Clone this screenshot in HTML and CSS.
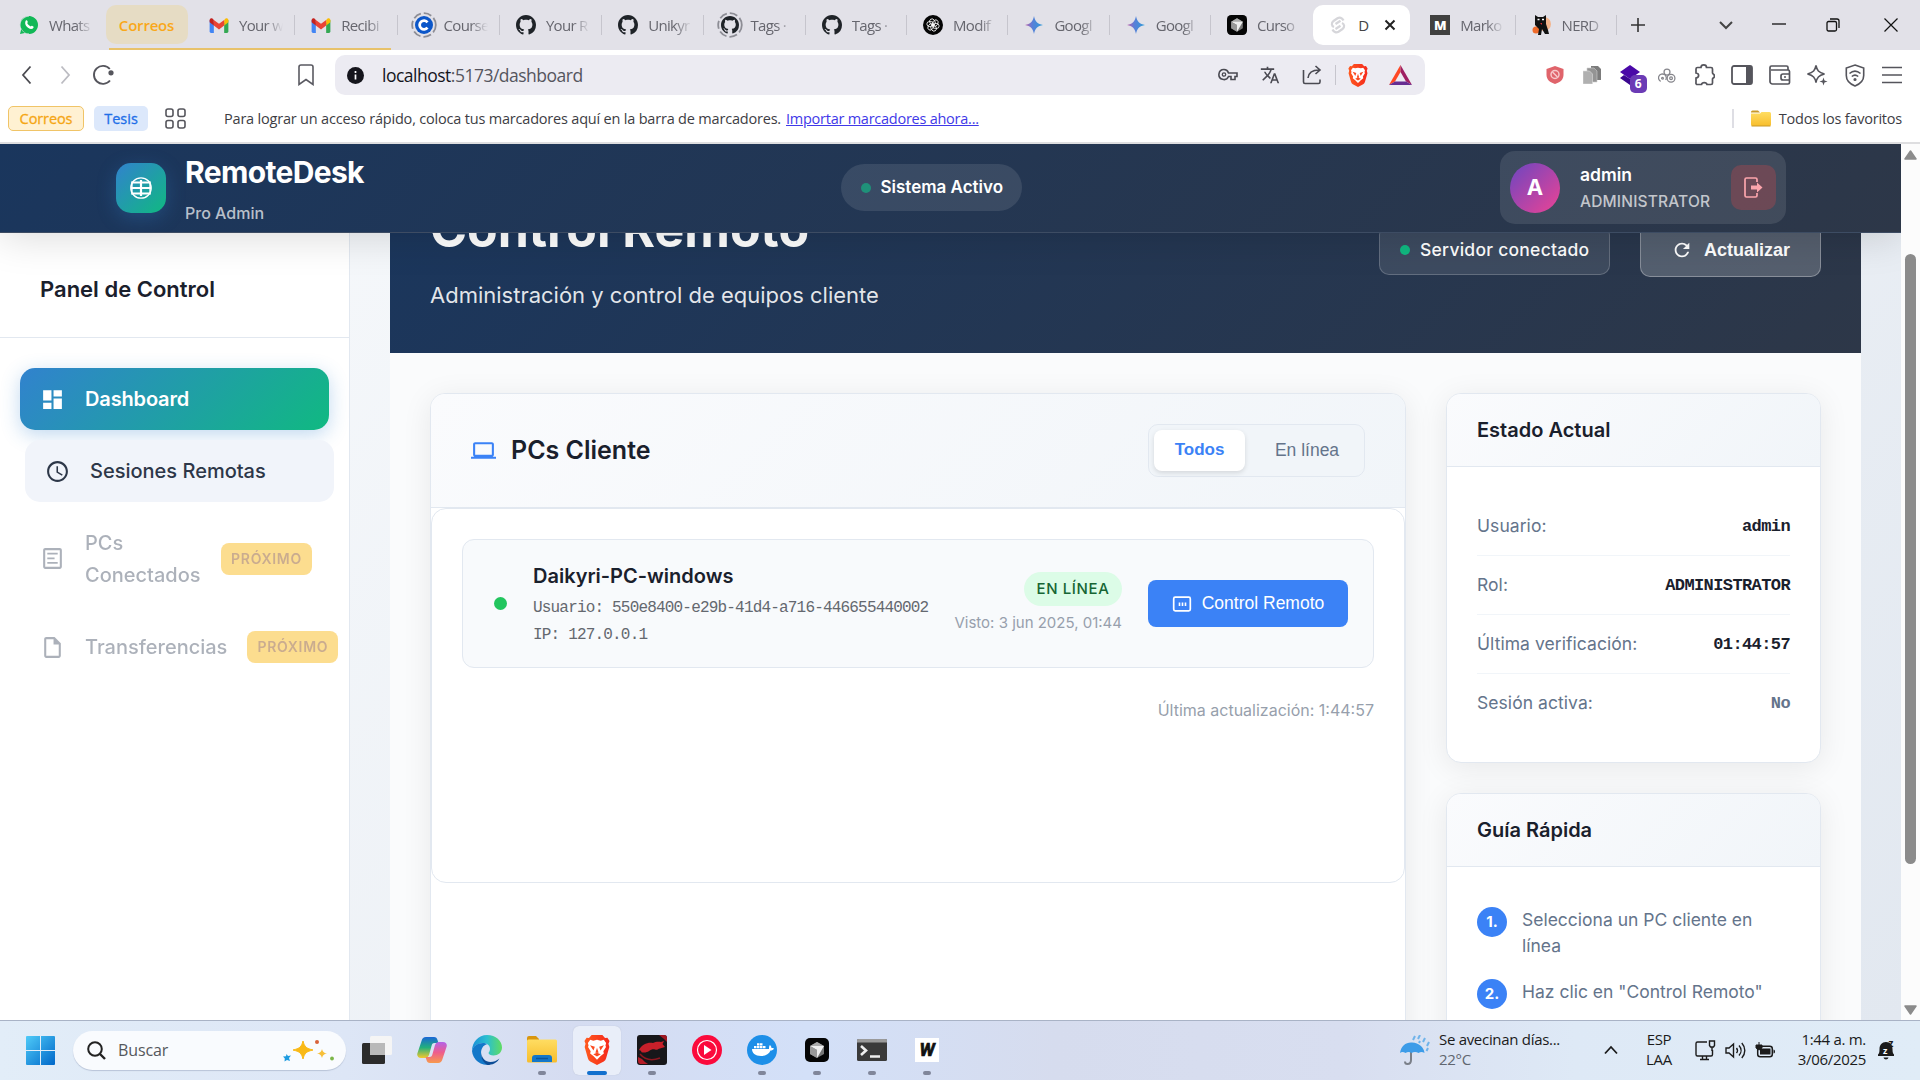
FILE: index.html
```html
<!DOCTYPE html>
<html lang="es">
<head>
<meta charset="utf-8">
<title>Dashboard - RemoteDesk</title>
<link rel="stylesheet" href="styles.css">
</head>
<body>
<svg class="defs" width="0" height="0">
  <defs>
    <linearGradient id="g-gem" x1="0" y1="0" x2="1" y2="0"><stop offset="0" stop-color="#c25fa8"/><stop offset=".4" stop-color="#5a7fd8"/><stop offset="1" stop-color="#2b9bd8"/></linearGradient>
    <linearGradient id="g-win" x1="0" y1="0" x2="1" y2="1"><stop offset="0" stop-color="#4fcbf8"/><stop offset="1" stop-color="#0067c9"/></linearGradient>
    <linearGradient id="g-edge" x1="0" y1="0" x2="1" y2="0"><stop offset="0" stop-color="#1b8fd8"/><stop offset=".5" stop-color="#2bbfd0"/><stop offset="1" stop-color="#5fdc62"/></linearGradient>
    <linearGradient id="g-cop1" x1="0" y1="0" x2="0" y2="1"><stop offset="0" stop-color="#1a66d6"/><stop offset=".5" stop-color="#22b07c"/><stop offset="1" stop-color="#f5c92c"/></linearGradient>
    <linearGradient id="g-cop2" x1="0" y1="0" x2="0" y2="1"><stop offset="0" stop-color="#b364e8"/><stop offset=".5" stop-color="#ee5d8d"/><stop offset="1" stop-color="#f79a4d"/></linearGradient>
    <linearGradient id="g-fold" x1="0" y1="0" x2="0" y2="1"><stop offset="0" stop-color="#ffdd62"/><stop offset="1" stop-color="#f7bd2c"/></linearGradient>
    <linearGradient id="g-brave" x1="0" y1="0" x2="1" y2="0"><stop offset="0" stop-color="#ff5a1f"/><stop offset="1" stop-color="#f5291c"/></linearGradient>
  </defs>
  <symbol id="gmail" viewBox="0 0 20 16"><path fill="#4285f4" d="M0 2v12.5A1.5 1.5 0 001.5 16H4.5V5z"/><path fill="#34a853" d="M20 2v12.5a1.500 1.500 0 01-1.500 1.500H15.500V5z"/><path fill="#c5221f" d="M0 2.500v2L4.500 8V2L3 .600C1.500-.500 0 .700 0 2.500z"/><path fill="#fbbc04" d="M20 2.500v2L15.500 8V2L17 .600c1.500-1.100 3 .100 3 1.900z"/><path fill="#ea4335" d="M4.500 2L10 6.200 15.500 2v6L10 12.200 4.500 8z"/></symbol>
  <symbol id="github" viewBox="0 0 16 16"><path d="M8 0C3.58 0 0 3.58 0 8c0 3.54 2.29 6.53 5.47 7.59.4.07.55-.17.55-.38 0-.19-.01-.82-.01-1.49-2.01.37-2.53-.49-2.69-.94-.09-.23-.48-.94-.82-1.13-.28-.15-.68-.52-.01-.53.63-.01 1.08.58 1.23.82.72 1.21 1.87.87 2.33.66.07-.52.28-.87.51-1.07-1.78-.2-3.64-.89-3.64-3.95 0-.87.31-1.59.82-2.15-.08-.2-.36-1.02.08-2.12 0 0 .67-.21 2.2.82.64-.18 1.32-.27 2-.27.68 0 1.36.09 2 .27 1.53-1.04 2.2-.82 2.2-.82.44 1.1.16 1.92.08 2.12.51.56.82 1.27.82 2.15 0 3.07-1.87 3.75-3.65 3.95.29.25.54.73.54 1.48 0 1.07-.01 1.93-.01 2.2 0 .21.15.46.55.38A8.013 8.013 0 0016 8c0-4.42-3.58-8-8-8z" fill="#1f2328"/></symbol>
  <symbol id="gem" viewBox="0 0 20 20"><path d="M10 1c.9 5.300 3.700 8.100 9 9-5.300.900-8.100 3.700-9 9-.900-5.300-3.700-8.100-9-9 5.300-.900 8.100-3.700 9-9z" fill="url(#g-gem)"/></symbol>
  <symbol id="cursor" viewBox="0 0 24 24"><rect width="24" height="24" rx="5" fill="#050505"/><path d="M12 4l7 4v8l-7 4-7-4V8z" fill="#777"/><path d="M5 8l7-4 7 4-7 1z" fill="#aaa"/><path d="M5 8h14l-7 12v-8z" fill="#eee"/><path d="M5 8l7 4v8l-7-4z" fill="#999"/></symbol>
  <symbol id="brave" viewBox="0 0 24 28"><path d="M7 0h10l2.500 2.800 2.200-.3 2 3-1 2.700.8 3-3 10.500c-.5 1.500-1 2.200-2.200 3L12 28l-6.300-3.300c-1.200-.8-1.700-1.500-2.200-3L.5 11.200l.8-3-1-2.700 2-3 2.200.3z" fill="url(#g-brave)"/><path d="M12 4.500l3.500.8 2.800-.8 2.200 3-.6 2.200.5 1.500-2.500 4 .5 2-3 2.500L12 23l-3.400-3.300-3-2.500.5-2-2.500-4 .5-1.500-.6-2.200 2.200-3 2.800.8z" fill="#fff"/><path d="M5.500 9.500l4.500 1.500-1.300 3.500zM18.500 9.500L14 11l1.300 3.500zM12 12l1.500 4.500h-3zM8.500 18l3.500-1.500 3.500 1.500L12 20z" fill="#fb4a20"/></symbol>
</svg>

<header class="tabstrip">
  <div class="tab tab-first"><svg width="18" height="18" viewBox="0 0 20 20"><path d="M10 0a10 10 0 100 20 10 10 0 01-4.700-1.200L0 20l1.300-5A10 10 0 1110 20z" fill="#15b858"/><circle cx="10" cy="10" r="9.500" fill="#12b857"/><path d="M6.500 5c.8-.8 1.500-.3 1.900.8.400 1 .2 1.300-.4 2 .9 1.900 2.100 3 4 3.800.7-.8 1-.9 1.800-.5 1.500.7 1.600 1 1.100 2-1.100 1.900-3.600 1.600-6-.1C6.300 11 4.800 8.300 6.500 5z" fill="#fff"/></svg><span>Whats</span></div>
  <div class="tab-group">Correos</div>
  <nav class="tabs">
    <div class="tab wide"><svg width="19" height="15"><use href="#gmail"/></svg><span>Your w</span></div>
    <div class="tab wide"><svg width="19" height="15"><use href="#gmail"/></svg><span>Recibi</span></div>
    <div class="tab wide"><svg class="ringed" width="26" height="26" viewBox="0 0 26 26"><circle cx="13" cy="13" r="11.800" fill="none" stroke="#8d8d95" stroke-width="1.800" stroke-dasharray="8 3"/><circle cx="13" cy="13" r="9" fill="#0b56c9"/><path d="M16.500 10.300a4.400 4.400 0 100 5.400" fill="none" stroke="#fff" stroke-width="2.800"/></svg><span>Course</span></div>
    <div class="tab wide"><svg width="20" height="20"><use href="#github"/></svg><span>Your R</span></div>
    <div class="tab wide"><svg width="20" height="20"><use href="#github"/></svg><span>Unikyr</span></div>
    <div class="tab"><svg class="ringed" width="26" height="26" viewBox="0 0 26 26"><circle cx="13" cy="13" r="11.800" fill="none" stroke="#8d8d95" stroke-width="1.800" stroke-dasharray="8 3"/><use href="#github" x="4" y="4" width="18" height="18"/></svg><span>Tags ·</span></div>
    <div class="tab"><svg width="20" height="20"><use href="#github"/></svg><span>Tags ·</span></div>
    <div class="tab"><svg width="20" height="20" viewBox="0 0 20 20"><circle cx="10" cy="10" r="10" fill="#050505"/><g fill="none" stroke="#fff" stroke-width=".8"><ellipse cx="11" cy="7.200" rx="2.600" ry="3.400" transform="rotate(30 10 10)"/><ellipse cx="11" cy="7.200" rx="2.600" ry="3.400" transform="rotate(90 10 10)"/><ellipse cx="11" cy="7.200" rx="2.600" ry="3.400" transform="rotate(150 10 10)"/><ellipse cx="11" cy="7.200" rx="2.600" ry="3.400" transform="rotate(210 10 10)"/><ellipse cx="11" cy="7.200" rx="2.600" ry="3.400" transform="rotate(270 10 10)"/><ellipse cx="11" cy="7.200" rx="2.600" ry="3.400" transform="rotate(330 10 10)"/></g></svg><span>Modif</span></div>
    <div class="tab"><svg width="20" height="20"><use href="#gem"/></svg><span>Googl</span></div>
    <div class="tab"><svg width="20" height="20"><use href="#gem"/></svg><span>Googl</span></div>
    <div class="tab last"><svg width="20" height="20"><use href="#cursor"/></svg><span>Curso</span></div>
  </nav>
  <div class="tab-active"><svg width="20" height="22" viewBox="0 0 20 22"><path d="M15.500 6.500c-1.300-3-4-3.400-6-2.200L5.500 7c-2.500 1.800-2 5 .5 6 M4.500 15.500c1.300 3 4 3.400 6 2.200l4-2.700c2.500-1.800 2-5-.5-6 M7.500 10l5-3.200 M7.500 15l5-3.200" fill="none" stroke="#d6d6da" stroke-width="2.200"/></svg><span>D</span><svg width="12" height="12" viewBox="0 0 12 12"><path d="M1.500 1.500l9 9m0-9l-9 9" stroke="#222" stroke-width="2"/></svg></div>
  <nav class="tabs">
    <div class="tab"><i class="ico-m">M</i><span>Marko</span></div>
    <div class="tab"><svg width="20" height="20" viewBox="0 0 20 20"><circle cx="12" cy="9" r="7" fill="#f3b48c"/><circle cx="4" cy="15" r="3.500" fill="#ee6b2b"/><path d="M3 0l3 2h5l3-2v9l2 6 1 4h-4l-3-5-1 6H6l1-6-4-4z" fill="#111"/><path d="M5.500 4.500h2M10 4.500h2" stroke="#fff" stroke-width="1.300"/><path d="M8 8h2v2z" fill="#d33"/></svg><span>NERD</span></div>
  </nav>
  <svg class="plus" width="14" height="14" viewBox="0 0 14 14"><path d="M7 0v14M0 7h14" stroke="#333" stroke-width="1.600"/></svg>
  <div class="winctl">
    <svg width="14" height="14" viewBox="0 0 14 14"><path d="M1 4l6 6 6-6" fill="none" stroke="#444" stroke-width="2"/></svg>
    <svg width="14" height="14" viewBox="0 0 14 14"><path d="M0 6h14" stroke="#111" stroke-width="1.300"/></svg>
    <svg width="14" height="14" viewBox="0 0 14 14"><rect x="1" y="3.500" width="9.500" height="9.500" rx="1.500" fill="none" stroke="#111" stroke-width="1.300"/><path d="M4 1h7a2 2 0 012 2v7" fill="none" stroke="#111" stroke-width="1.300"/></svg>
    <svg width="14" height="14" viewBox="0 0 14 14"><path d="M.5.500l13 13m0-13l-13 13" stroke="#111" stroke-width="1.200"/></svg>
  </div>
</header>

<div class="toolbar">
  <div class="navbtns">
    <svg width="20" height="20" viewBox="0 0 20 20"><path d="M13.500 1.500L6 10l7.500 8.500" fill="none" stroke="#4a4a50" stroke-width="1.800"/></svg>
    <svg width="20" height="20" viewBox="0 0 20 20"><path d="M6.500 1.500L14 10l-7.500 8.500" fill="none" stroke="#bcbcc2" stroke-width="1.800"/></svg>
    <svg width="22" height="22" viewBox="0 0 22 22"><path d="M17.800 5a9 9 0 10.200 11.500" fill="none" stroke="#55555c" stroke-width="1.900"/><circle cx="19" cy="8.800" r="2.600" fill="#55555c"/></svg>
  </div>
  <svg class="bm" width="16" height="22" viewBox="0 0 16 22"><path d="M1 3a2 2 0 012-2h10a2 2 0 012 2v17.500l-7-5-7 5z" fill="none" stroke="#5a5a62" stroke-width="1.600"/></svg>
  <div class="omnibox">
    <svg width="17" height="17" viewBox="0 0 17 17"><circle cx="8.500" cy="8.500" r="8.500" fill="#15151c"/><path d="M8.500 7.500v5M8.500 4v2" stroke="#fff" stroke-width="1.700"/></svg>
    <span class="url"><b>localhost</b>:5173/dashboard</span>
    <div class="omni-icons">
      <svg width="20" height="14" viewBox="0 0 20 14"><path d="M6 1.500a5 5 0 104.500 7h2.500v3h4v-3h2v-3.500H10.500A5 5 0 006 1.500z" fill="none" stroke="#4a4a52" stroke-width="1.600"/><circle cx="6" cy="6.500" r="1.700" fill="none" stroke="#4a4a52" stroke-width="1.300"/></svg>
      <svg width="20" height="20" viewBox="0 0 24 24"><path fill="#4a4a52" d="M12.870 15.070l-2.540-2.510.03-.03A17.520 17.520 0 0014.070 6H17V4h-7V2H8v2H1v2h11.170C11.500 7.920 10.440 9.750 9 11.350 8.070 10.320 7.300 9.190 6.690 8h-2c.73 1.630 1.730 3.170 2.980 4.560l-5.090 5.020L4 19l5-5 3.110 3.110.76-2.040zM18.500 10h-2L12 22h2l1.120-3h4.750L21 22h2l-4.500-12zm-2.620 7l1.620-4.330L19.120 17h-3.240z"/></svg>
      <svg width="20" height="20" viewBox="0 0 20 20"><path d="M1.500 5v12a1.500 1.500 0 001.500 1.500h13.500a1.500 1.500 0 001.500-1.500v-2.500M6 13c.5-5 4-8 11-8M13.500 1l4.500 4-4.500 4" fill="none" stroke="#4a4a52" stroke-width="1.600"/></svg>
      <i class="omni-sep"></i>
      <svg width="20" height="23"><use href="#brave"/></svg>
      <svg width="23" height="20" viewBox="0 0 23 20"><path d="M11.500 0L0 20l6-3.500 5.500-9.500z" fill="#ff4724"/><path d="M11.500 0L23 20l-6-3.500-5.500-9.500z" fill="#9e1f63"/><path d="M0 20h23l-6-3.600H6z" fill="#662d91"/></svg>
    </div>
  </div>
  <div class="exts">
    <svg width="18" height="18" viewBox="0 0 18 18"><path d="M9 0l8.500 3v6c0 4.500-3.500 7.500-8.500 9-5-1.500-8.500-4.500-8.500-9V3z" fill="#e0646b"/><circle cx="9" cy="8.500" r="4" fill="none" stroke="#f7c9cb" stroke-width="1.500"/><path d="M6.500 6l5 5" stroke="#f7c9cb" stroke-width="1.500"/></svg>
    <svg width="18" height="18" viewBox="0 0 18 18"><path d="M8 0h7l3 3v11H8z" fill="#7c7c7c"/><path d="M4 2h7l3 3v11H4z" fill="#949494" stroke="#ccc" stroke-width=".6"/><path d="M0 5h6.500l3 3v10H0z" fill="#b0b0b0" stroke="#ddd" stroke-width=".6"/></svg>
    <div class="ext-badge"><svg width="20" height="20" viewBox="0 0 20 20"><path d="M10 0l10 7-10 7L0 7z" fill="#4a09a8"/><path d="M0 13l4-3 6 4 6-4 4 3-10 7z" fill="#3b0790"/></svg><b>6</b></div>
    <svg width="18" height="15" viewBox="0 0 20 16" fill="none" stroke="#85858b" stroke-width="1.400"><circle cx="14.500" cy="11" r="4.300"/><circle cx="14.500" cy="11" r="1.500"/><circle cx="10" cy="4.200" r="3.300"/><path d="M8.500 13a4.300 4.300 0 10-5.500 1.500"/><circle cx="5" cy="11" r="1"/></svg>
    <svg width="21" height="22" viewBox="0 0 21 22"><path d="M7 3.500C7 0 12.500 0 12.500 3.500H17a1.500 1.500 0 011.500 1.500v4c0 1 2 1 2 3s-2 2-2 3v4a1.500 1.500 0 01-1.500 1.500h-4c-.5-2.500-5-2.500-5.500 0H3.500A1.500 1.500 0 012 18.500v-4.500c3.500-.5 3.500-4.500 0-5V5a1.500 1.500 0 011.500-1.500z" fill="none" stroke="#55555c" stroke-width="1.700"/></svg>
    <svg width="22" height="20" viewBox="0 0 22 20"><rect x="1" y="1" width="20" height="18" rx="2" fill="none" stroke="#55555c" stroke-width="1.800"/><path d="M15 1h6v18h-6z" fill="#55555c"/></svg>
    <svg width="22" height="20" viewBox="0 0 22 20" fill="none" stroke="#55555c" stroke-width="1.700"><path d="M19 5V2.500A1.500 1.500 0 0017.500 1h-15A1.500 1.500 0 001 2.500v14A2.500 2.500 0 003.500 19H19a1.500 1.500 0 001.500-1.500v-11A1.500 1.500 0 0019 5H2"/><path d="M21 9h-7a2 2 0 00-2 2v2a2 2 0 002 2h7M15 12h2"/></svg>
    <svg width="22" height="22" viewBox="0 0 22 22"><path d="M10 1.500c1 5 2.500 7 8.500 8.500-6 1.500-7.500 3.500-8.500 8.500-1-5-2.500-7-8.500-8.500 6-1.500 7.500-3.500 8.500-8.500z" fill="none" stroke="#55555c" stroke-width="1.600"/><path d="M17.500 13.500l1 3 3 1-3 1-1 3-1-3-3-1 3-1z" fill="#55555c"/></svg>
    <svg width="20" height="23" viewBox="0 0 20 23" fill="none" stroke="#55555c" stroke-width="1.600"><path d="M10 1l8.700 3v7.500c0 5-3.700 8.500-8.700 10.500-5-2-8.700-5.500-8.700-10.500V4z"/><path d="M4.500 9.500c3.500-3 7.500-3 11 0M6.800 12.500c2-1.700 4.400-1.700 6.400 0"/><circle cx="10" cy="15.500" r=".8"/></svg>
    <svg width="20" height="18" viewBox="0 0 20 18"><path d="M0 1.500h20M0 9h20M0 16.500h20" stroke="#55555c" stroke-width="1.700"/></svg>
  </div>
</div>

<div class="bookmarks">
  <span class="chip chip-y">Correos</span>
  <span class="chip chip-b">Tesis</span>
  <svg class="grid-ico" width="21" height="21" viewBox="0 0 21 21" fill="none" stroke="#55555c" stroke-width="1.600"><rect x="1" y="1" width="7" height="7.500" rx="2"/><rect x="13" y="1" width="7" height="7.500" rx="2"/><rect x="1" y="12.500" width="7" height="7.500" rx="2"/><rect x="13" y="12.500" width="7" height="7.500" rx="2"/></svg>
  <span class="bm-text">Para lograr un acceso rápido, coloca tus marcadores aquí en la barra de marcadores.</span>
  <a class="bm-link">Importar marcadores ahora...</a>
  <div class="all-bm"><svg width="20" height="17" viewBox="0 0 20 17"><path d="M0 2a1.500 1.500 0 011.500-1.500H7L9 2.500H0z" fill="#c99a28"/><path d="M0 3.500h9l1.500-1.500h8A1.500 1.500 0 0120 3.500v11a1.500 1.500 0 01-1.500 1.500h-17A1.500 1.500 0 010 14.500z" fill="url(#g-fold)"/><path d="M.5 16h19" stroke="#c99a28"/></svg><span>Todos los favoritos</span></div>
</div>

<div class="viewport">
  <div class="page">
    <header class="app-header">
      <div class="brand">
        <div class="logo"><svg width="24" height="24" viewBox="0 0 24 24" fill="none" stroke="#fff"><circle cx="12" cy="12" r="10.200" stroke-width="1.300"/><path d="M2.500 6.500h19M2 12h20M2.500 17.500h19" stroke-width="2.200"/><path d="M3 5.500v13M21 5.500v13" stroke-width="1.300"/><path d="M12 4v16" stroke-width="2.200"/></svg></div>
        <div class="brand-text"><h1>RemoteDesk</h1><small>Pro Admin</small></div>
      </div>
      <div class="sys"><i></i><span>Sistema Activo</span></div>
      <div class="user">
        <div class="avatar">A</div>
        <div class="user-text"><strong>admin</strong><span>ADMINISTRATOR</span></div>
        <button class="logout"><svg width="20" height="22" viewBox="0 0 20 22" fill="none" stroke="#fca5ac" stroke-width="1.700"><path d="M13 5V2.500A1.500 1.500 0 0011.500 1h-9A1.500 1.500 0 001 2.500v16A1.500 1.500 0 002.500 20h9a1.500 1.500 0 001.500-1.500V16"/><path d="M7 8.500h6V5.500l5.500 5-5.500 5v-3H7z" fill="#fca5ac" stroke="none"/></svg></button>
      </div>
    </header>

    <div class="body-row">
      <aside class="sidebar">
        <h2>Panel de Control</h2>
        <nav>
          <a class="item active"><svg width="25" height="25" viewBox="0 0 24 24"><path fill="#fff" d="M3 13h8V3H3v10zm0 8h8v-6H3v6zm10 0h8V11h-8v10zm0-18v6h8V3h-8z"/></svg><span>Dashboard</span></a>
          <a class="item hover"><svg width="25" height="25" viewBox="0 0 24 24"><path fill="#2d3748" d="M11.990 2C6.470 2 2 6.480 2 12s4.470 10 9.990 10C17.520 22 22 17.520 22 12S17.520 2 11.990 2zM12 20c-4.420 0-8-3.580-8-8s3.580-8 8-8 8 3.580 8 8-3.580 8-8 8zm.5-13H11v6l5.250 3.150.75-1.230-4.500-2.670z"/></svg><span>Sesiones Remotas</span></a>
          <a class="item off"><svg width="25" height="25" viewBox="0 0 24 24"><path fill="#4a5568" d="M19 4v16H5V4h14m0-2H5c-1.100 0-2 .9-2 2v16c0 1.100.9 2 2 2h14c1.100 0 2-.9 2-2V4c0-1.100-.9-2-2-2z"/><path fill="#4a5568" d="M17 6.500v1.700H7V6.500zM14 11v1.800H7V11zM17 15.300V17H7v-1.700z"/></svg><span>PCs Conectados</span><em>PRÓXIMO</em></a>
          <a class="item off"><svg width="25" height="25" viewBox="0 0 24 24"><path fill="#4a5568" d="M14 2H6c-1.100 0-2 .9-2 2v16c0 1.100.9 2 2 2h12c1.100 0 2-.9 2-2V8l-6-6zM6 20V4h7v5h5v11H6z"/></svg><span>Transferencias</span><em>PRÓXIMO</em></a>
        </nav>
      </aside>

      <main class="main">
        <section class="hero">
          <div><h1>Control Remoto</h1><p>Administración y control de equipos cliente</p></div>
          <div class="hero-actions">
            <div class="server"><i></i><span>Servidor conectado</span></div>
            <button class="refresh"><svg width="22" height="22" viewBox="0 0 24 24"><path fill="#fff" d="M17.650 6.350A7.958 7.958 0 0012 4c-4.420 0-7.990 3.580-7.990 8s3.570 8 7.990 8c3.730 0 6.840-2.550 7.730-6h-2.080A5.990 5.990 0 0112 18c-3.310 0-6-2.690-6-6s2.690-6 6-6c1.660 0 3.140.69 4.220 1.780L13 11h7V4l-2.350 2.350z"/></svg><span>Actualizar</span></button>
          </div>
        </section>

        <div class="content">
          <section class="card pcs">
            <div class="card-head">
              <svg width="25" height="25" viewBox="0 0 24 24"><path fill="#3b82f6" d="M20 18c1.100 0 1.990-.9 1.990-2L22 6c0-1.100-.9-2-2-2H4c-1.100 0-2 .9-2 2v10c0 1.100.9 2 2 2H0v2h24v-2h-4zM4 6h16v10H4V6z"/></svg>
              <h2>PCs Cliente</h2>
              <div class="filter"><button class="on">Todos</button><button>En línea</button></div>
            </div>
            <div class="list">
              <article class="pc">
                <i class="dot"></i>
                <div class="info"><h3>Daikyri-PC-windows</h3><p>Usuario: 550e8400-e29b-41d4-a716-446655440002</p><p>IP: 127.0.0.1</p></div>
                <div class="state"><b>EN LÍNEA</b><span>Visto: 3 jun 2025, 01:44</span></div>
                <button class="control"><svg width="20" height="20" viewBox="0 0 20 20" fill="none" stroke="#fff"><rect x="1.700" y="3.200" width="16.600" height="13.600" rx="1.500" stroke-width="1.700"/><path d="M7.500 8.500v3.500M10.500 8.500v3.500M13.500 8.500v3.500" stroke-width="1.600"/></svg><span>Control Remoto</span></button>
              </article>
              <div class="updated">Última actualización: 1:44:57</div>
            </div>
          </section>

          <div class="side">
            <section class="card status">
              <h2>Estado Actual</h2>
              <dl>
                <div><dt>Usuario:</dt><dd>admin</dd></div>
                <div><dt>Rol:</dt><dd>ADMINISTRATOR</dd></div>
                <div><dt>Última verificación:</dt><dd>01:44:57</dd></div>
                <div><dt>Sesión activa:</dt><dd class="muted">No</dd></div>
              </dl>
            </section>
            <section class="card guide">
              <h2>Guía Rápida</h2>
              <ul>
                <li><b>1.</b><span>Selecciona un PC cliente en línea</span></li>
                <li><b>2.</b><span>Haz clic en "Control Remoto"</span></li>
              </ul>
            </section>
          </div>
        </div>
      </main>
    </div>
  </div>
  <div class="scrollbar">
    <svg width="13" height="10" viewBox="0 0 13 10"><path d="M6.500 1L12 9H1z" fill="#8b8b8b" stroke="#8b8b8b" stroke-linejoin="round" stroke-width="1.500"/></svg>
    <i></i>
    <svg width="13" height="10" viewBox="0 0 13 10"><path d="M6.500 9L12 1H1z" fill="#8b8b8b" stroke="#8b8b8b" stroke-linejoin="round" stroke-width="1.500"/></svg>
  </div>
</div>

<footer class="taskbar">
  <svg class="start" width="29" height="29" viewBox="0 0 29 29" fill="url(#g-win)"><path d="M1 0h13v14H0V1a1 1 0 011-1zM15 0h13a1 1 0 011 1v13H15zM0 15h14v14H1a1 1 0 01-1-1zM15 15h14v13a1 1 0 01-1 1H15z"/></svg>
  <div class="search"><svg width="19" height="19" viewBox="0 0 19 19"><circle cx="8" cy="8" r="6.800" fill="none" stroke="#222" stroke-width="2"/><path d="M13 13l5 5" stroke="#222" stroke-width="2.400"/></svg><span>Buscar</span>
    <svg width="52" height="26" viewBox="0 0 52 26"><path d="M20 4c1.500 6 3.500 7.500 10 9-6.500 1.500-8.500 3-10 9-1.500-6-3.500-7.500-10-9 6.500-1.500 8.500-3 10-9z" fill="#f9b917" stroke="#f9b917" stroke-linejoin="round"/><path d="M39 12c.8 3 1.800 3.700 5 4.500-3.200.8-4.200 1.500-5 4.500-.8-3-1.800-3.700-5-4.500 3.200-.8 4.200-1.500 5-4.500z" fill="#f7bf3a"/><path d="M3.500 17l1.500 2 3-.5-2 2.500 1 3-3-1-2.500 1.500.3-3-1.800-2 3-.3z" fill="#1e9be0"/><circle cx="34" cy="5" r="2" fill="#d9623b"/><circle cx="49" cy="21.500" r="1.900" fill="#7bb648"/></svg></div>
  <div class="apps">
    <div class="app"><svg width="30" height="30" viewBox="0 0 30 30"><rect x="0" y="8" width="23" height="21" rx="1.500" fill="#2b2b2b"/><rect x="8" y="1" width="22" height="19" rx="1.500" fill="#f5f5f5"/><path d="M8 8h15v12H8z" fill="#b9b9b9"/></svg></div>
    <div class="app"><svg width="30" height="28" viewBox="0 0 30 28"><path d="M9 1h8c2 0 3 1 3.500 3l1 3h-4c-2 0-2.500 1-3 3l-2.500 9c-.8 2-2 3-4 3H4c-3 0-4.500-2.500-3.500-5L4.500 5C5.200 2.500 6.500 1 9 1z" fill="url(#g-cop1)"/><path d="M21 27h-8c-2 0-3-1-3.500-3l-1-3h4c2 0 2.500-1 3-3L18 9c.8-2 2-3 4-3h4c3 0 4.500 2.500 3.500 5l-4 12c-.700 2.500-2 4-4.500 4z" fill="url(#g-cop2)"/></svg></div>
    <div class="app"><svg width="30" height="30" viewBox="0 0 30 30"><path d="M15 0c9 0 15 6 15 12.500 0 5-4 8-8.500 8-3 0-5-1.500-5-2.500 0-.8 1.500-1.500 1.500-4C18 10.500 15 8 11 8 5 8 1 12 0 16 0 7 6.500 0 15 0z" fill="url(#g-edge)"/><path d="M0 16C1 11 5.500 8 11 8c1.500 0 3 .5 4 1.200-4 .8-6 4.800-6 8.800 0 5 3.500 10.500 9 11.500A15 15 0 010 16z" fill="#1378c9"/><path d="M9.500 17c-.5 6 4 10 9 10 3 0 6-1 9-3.500C25 28 20 30 15.500 30 12 28 8.500 24 9.500 17z" fill="#0c4d96"/></svg></div>
    <div class="app open"><svg width="30" height="28" viewBox="0 0 30 28"><path d="M0 2a2 2 0 012-2h7l3 3v4H0z" fill="#d9960f"/><rect y="3.500" width="30" height="23" rx="1.500" fill="url(#g-fold)"/><path d="M5 26v-4a3 3 0 013-3h14a3 3 0 013 3v4z" fill="#1477c9"/><path d="M9 22.500h12" stroke="#0b559c" stroke-width="1.500"/></svg></div>
    <div class="app current"><svg width="26" height="30"><use href="#brave"/></svg></div>
    <div class="app open"><svg width="30" height="30" viewBox="0 0 30 30"><rect width="30" height="30" rx="3" fill="#17171a"/><path d="M2 15c3-6 9-8 14-7 2-1 5-1.500 8-1l3-1-1.500 3 2.500 3-5 1.500c-2 .5-3 2-5 1-2-.5-4 0-6 1.500-2 1.500-5 2-8 1 1-.7 0-1.500-2-2z" fill="#c8202a"/><path d="M1 22l4 2 3 3 3 2H3a3 3 0 01-2-3z" fill="#b51c27"/><path d="M22 0h5a3 3 0 013 3v4l-3-3z" fill="#a01722"/><path d="M3 19c5 6 12 7 20 4" stroke="#8d1820" fill="none" stroke-width="1.500"/></svg></div>
    <div class="app"><svg width="30" height="30" viewBox="0 0 30 30"><circle cx="15" cy="15" r="15" fill="#fb0a3c"/><circle cx="15" cy="15" r="9.500" fill="none" stroke="#fff" stroke-width="1.200"/><path d="M12 10l7.500 5-7.500 5z" fill="#fff"/></svg></div>
    <div class="app open"><svg width="30" height="30" viewBox="0 0 30 30"><circle cx="15" cy="15" r="15" fill="#1d8fe8"/><path d="M5 14h17c0-2 0-3 1-4 1 1 1.500 2 1.500 3 1 0 1.800 0 2.500.5-.7 1.500-2 2-3.500 2C22 19 19 21 14 21c-6 0-9-3-9-7zM7 11h2.500v2.200H7zM10 11h2.500v2.200H10zM13 11h2.500v2.200H13zM16 11h2.500v2.200H16zM10 8.200h2.500v2.200H10zM13 8.200h2.500v2.200H13z" fill="#fff"/></svg></div>
    <div class="app open"><svg width="24" height="24"><use href="#cursor"/></svg></div>
    <div class="app open"><svg width="30" height="22" viewBox="0 0 30 22"><rect width="30" height="22" rx="1.500" fill="#3a3a3a"/><path d="M0 1.500A1.500 1.500 0 011.500 0h27A1.500 1.500 0 0130 1.500V3.500H0z" fill="#9a9a9a"/><path d="M4 7l5 4.500L4 16M13 17.500h10" fill="none" stroke="#eee" stroke-width="2.600"/></svg></div>
    <div class="app open"><i class="ico-w">W</i></div>
  </div>
  <div class="weather"><svg width="30" height="30" viewBox="0 0 30 30"><path d="M12 8v16c0 2.500-1.500 4-3.500 4-1.500 0-2.500-1-2.500-2.500" transform="translate(-1 1)" fill="none" stroke="#7a7f88" stroke-width="2"/><path d="M0 18C1 11 6 7 12 7.500 19 8 24 12 24.500 18c-2-1.500-4-1.500-6 0-2-1.500-5-1.500-7 0-2-1.500-4-1.500-6 0-2-1.300-4-1.300-5.500 0z" fill="#3d9ce8"/><path d="M15 1l-2 4M20 0l-2 4M25 3l-2 4M29 7l-2 4M28 13l-1.500 3M20 6l-1 2" stroke="#6fb3ea" stroke-width="2"/></svg><p><span>Se avecinan días...</span><span class="dim">22°C</span></p></div>
  <svg class="tray-up" width="14" height="10" viewBox="0 0 14 10"><path d="M1 8.500l6-6.500 6 6.500" fill="none" stroke="#1b1b1b" stroke-width="1.800"/></svg>
  <p class="lang"><span>ESP</span><span>LAA</span></p>
  <div class="tray">
    <svg width="21" height="21" viewBox="0 0 21 21" fill="none" stroke="#1b1b1b" stroke-width="1.400"><path d="M12 2H2.500A1.500 1.500 0 001 3.500v11A1.500 1.500 0 002.500 16H16a1.500 1.500 0 001.500-1.500V10M5 19.500h9M7.500 16v3M11.500 16v3"/><path d="M14.500 1h5v4.500l-1 1.500h-3l-1-1.500zM17 7v4"/></svg>
    <svg width="21" height="17" viewBox="0 0 21 17" fill="none" stroke="#1b1b1b" stroke-width="1.400"><path d="M1 6h3l4.500-4v13L4 11H1z"/><path d="M11.500 6c1.200 1.500 1.200 3.500 0 5M14 3.500c2.700 3 2.700 7 0 10M16.800 1c4 4.500 4 10.500 0 15"/></svg>
    <svg width="21" height="17" viewBox="0 0 21 17"><rect x="2.700" y="4.200" width="14.600" height="10.600" rx="2.500" fill="none" stroke="#1b1b1b" stroke-width="1.500"/><path d="M5 6.500h10.500v6H5z" fill="#1b1b1b"/><path d="M18.500 7.500c2 0 2 4 0 4z" fill="#1b1b1b"/><path d="M4 0v3M1 3h6v3L4 8 1 6z" fill="#1b1b1b" stroke="#1b1b1b"/></svg>
  </div>
  <p class="clock"><span>1:44 a. m.</span><span>3/06/2025</span></p>
  <svg class="bell" width="18" height="20" viewBox="0 0 18 20"><path d="M1 14.500c1-1 1.500-2 1.500-5.500C2.500 5 5 2 9 2c4.500 0 6.500 3 6.500 7 0 3.500.5 4.500 1.500 5.500V16H1zM6.500 17.500h5c-.5 2.500-4.500 2.500-5 0z" fill="#1b1b1b"/><text x="6" y="13.500" font-size="9">z</text><text x="11.500" y="7" font-size="10" class="z2">z</text></svg>
</footer>
</body>
</html>
```

FILE: styles.css
```css
* { box-sizing: border-box; }
html, body { margin: 0; height: 100%; overflow: hidden; }
body { width: 1920px; height: 1080px; display: flex; flex-direction: column; background: #fff; font-family: "Open Sans", "Noto Sans", sans-serif; font-size: 15px; color: #333; }
h1, h2, h3, p, dl, dd, ul { margin: 0; padding: 0; }
ul { list-style: none; }
svg { display: block; flex: none; }
.defs { position: absolute; }
button { border: 0; background: none; padding: 0; margin: 0; font-family: "Liberation Sans", Arial, sans-serif; display: flex; align-items: center; }

/* Browser tabs */
.tabstrip { height: 50px; flex: none; background: #e2e1e8; display: flex; align-items: center; }
.tabs { display: flex; }
.tab { width: 101.300px; height: 30px; padding-left: 16px; display: flex; align-items: center; position: relative; color: #66666e; letter-spacing: -.700px; }
.tab.wide { width: 102.300px; }
.tab svg { width: 20px; }
.tab svg.ringed { width: 26px; margin: 0 -3px; }
.tab svg.ringed + span { margin-left: 10px; }
.tab > span { margin-left: 10px; width: 44px; overflow: hidden; white-space: nowrap; -webkit-mask: linear-gradient(90deg, #000 60%, transparent); mask: linear-gradient(90deg, #000 60%, transparent); }
.tab::after { content: ""; position: absolute; right: 0; top: 5px; height: 20px; width: 1px; background: #c6c5cd; }
.tab.last::after, .tab-first::after { display: none; }
.tab-first { width: 106px; padding-left: 19px; }
.tab-group { width: 82px; height: 39px; margin-right: 5px; margin-top: -1px; border-radius: 10px; background: #e6dcc4; color: #f9a81a; font-weight: 600; display: flex; align-items: center; justify-content: center; letter-spacing: -.200px; padding-right: 1px; position: relative; }
.tab-group::after { content: ""; position: absolute; left: 3px; top: 43px; width: 282px; height: 2px; background: #e8c26a; }
.tab-active { width: 97px; height: 40px; margin: 0 4px 0 1px; border-radius: 10px; background: #fff; display: flex; align-items: center; padding-left: 15px; color: #444; }
.tab-active span { width: 11px; margin: 0 15px 0 10px; }
.ico-m { width: 20px; height: 20px; background: #404040; color: #fff; font: 800 13px/20px "Open Sans", sans-serif; letter-spacing: 0; text-align: center; flex: none; }
.plus { margin-left: 14px; }
.winctl { margin-left: auto; display: flex; justify-content: space-between; width: 179px; margin-right: 22px; }
.winctl svg:nth-child(2), .winctl svg:nth-child(3) { margin-left: -5px; }

/* Toolbar */
.toolbar { height: 50px; flex: none; display: flex; align-items: center; }
.navbtns { display: flex; align-items: center; gap: 17.500px; width: 298px; padding-left: 17px; }
.bm { margin-right: 21px; }
.omnibox { width: 1090px; height: 40px; border-radius: 10px; background: #ecebf2; display: flex; align-items: center; padding-left: 12px; }
.url { margin-left: 18px; font-size: 17.500px; letter-spacing: -.500px; color: #55555e; padding-bottom: 1px; }
.url b { font-weight: 400; color: #15151c; }
.omni-icons { margin-left: auto; margin-right: 4px; display: grid; grid-template-columns: 42px 42px 42px 4px 42px 42px; align-items: center; justify-items: center; }
.omni-sep { width: 1px; height: 20px; background: #c6c5cd; }
.exts { margin-left: auto; padding-right: 9px; display: grid; grid-template-columns: repeat(10, 37.500px); align-items: center; justify-items: center; }
.ext-badge { position: relative; }
.ext-badge b { position: absolute; left: 10px; top: 10px; width: 17px; height: 18px; border-radius: 5px; background: #6b3bb5; color: #fff; font-size: 12px; line-height: 18px; text-align: center; }

.bookmarks { height: 44px; flex: none; display: flex; align-items: center; padding: 0 18px 6px 8px; border-bottom: 2px solid #dedee0; color: #3d3d44; font-size: 14.500px; }
.chip { height: 25px; border-radius: 5px; display: flex; align-items: center; justify-content: center; }
.chip-y { width: 76px; border: 1px solid #f0c467; background: #fff1d2; color: #f5a614; letter-spacing: -.100px; -webkit-text-stroke: .3px; }
.chip-b { width: 54px; margin-left: 10px; background: #dce8fb; color: #1f6fe8; -webkit-text-stroke: .3px; }
.grid-ico { margin: 0 38px 0 17px; }
.bm-text { width: 562px; letter-spacing: -.195px; white-space: nowrap; }
.bm-link { color: #3f39e8; text-decoration: underline; letter-spacing: -.250px; white-space: nowrap; }
.all-bm { margin-left: auto; padding-left: 17px; border-left: 2px solid #dedee4; display: flex; align-items: center; gap: 8px; letter-spacing: -.220px; white-space: nowrap; }

/* Viewport */
.viewport { flex: none; height: 876px; display: flex; overflow: hidden; }
.page { width: 1901px; height: 876px; overflow: hidden; font-family: Inter, sans-serif; background: linear-gradient(135deg, #f8fafc, #e2e8f0); line-height: 1.6; }
.scrollbar { width: 19px; background: #fcfcfc; display: flex; flex-direction: column; align-items: center; padding: 6px 0 5px; }
.scrollbar i { width: 11px; height: 610px; border-radius: 6px; background: #8b8b8b; margin: 94px 0 auto; }

.app-header { height: 89px; position: relative; z-index: 5; display: flex; align-items: center; justify-content: space-between; padding: 0 115px 1px 116px; background: linear-gradient(135deg, #1a365d, #2d3748); border-bottom: 1px solid #3d4c63; box-shadow: 0 4px 40px rgba(0, 0, 0, .15); color: #fff; }
.brand { display: flex; align-items: center; gap: 19px; width: 246px; }
.logo { width: 50px; height: 50px; flex: none; border-radius: 15px; background: linear-gradient(135deg, #3182ce, #10b981); display: flex; align-items: center; justify-content: center; box-shadow: 0 5px 19px rgba(49, 130, 206, .3); }
.brand-text { margin-top: -2px; }
.brand-text h1 { font-size: 30px; line-height: 48px; letter-spacing: -.650px; font-weight: 700; }
.brand-text small { display: block; font-size: 16px; line-height: 26px; margin-top: 4px; font-weight: 500; color: rgba(255, 255, 255, .7); }
.sys { width: 181px; height: 47px; border-radius: 24px; background: rgba(255, 255, 255, .1); display: flex; align-items: center; padding-left: 20px; gap: 10px; font-size: 17px; font-weight: 600; white-space: nowrap; }
.sys i { width: 10px; height: 10px; border-radius: 50%; background: #1f9179; }
.user { width: 286px; height: 73px; border-radius: 15px; background: rgba(255, 255, 255, .1); display: flex; align-items: center; padding: 0 10px; }
.avatar { width: 50px; height: 50px; border-radius: 50%; background: linear-gradient(135deg, #6b46c1, #ed4394); display: flex; align-items: center; justify-content: center; font-size: 22px; font-weight: 700; }
.user-text { margin-left: 20px; width: 151px; }
.user-text strong, .user-text span { display: block; line-height: 27px; }
.user-text strong { font-size: 17.500px; font-weight: 600; }
.user-text span { font-size: 15.500px; font-weight: 500; letter-spacing: .180px; color: rgba(255, 255, 255, .7); }
.logout { width: 45px; height: 45px; border-radius: 10px; background: rgba(239, 68, 68, .25); justify-content: center; }

.body-row { display: flex; height: 900px; }
.sidebar { width: 350px; flex: none; background: #fff; border-right: 1px solid #e2e8f0; }
.sidebar h2 { height: 105px; border-bottom: 1px solid #e2e8f0; padding: 36px 40px 0; font-size: 22px; line-height: 40px; font-weight: 600; color: #1a202c; }
.sidebar nav { padding: 30px 20px 0; display: flex; flex-direction: column; gap: 10px; }
.item { height: 62px; width: 309px; display: flex; align-items: center; padding: 0 20px; border-radius: 15px; font-size: 20px; line-height: 32px; font-weight: 500; color: #4a5568; }
.item svg { margin-right: 20px; }
.item.active { background: linear-gradient(135deg, #3182ce, #10b981); color: #fff; font-weight: 600; letter-spacing: -.150px; box-shadow: 0 5px 19px rgba(49, 130, 206, .3); }
.item.hover { background: #f1f4fa; color: #2d3748; margin-left: 5px; }
.item.off { opacity: .45; width: 318px; }
.item.off:nth-child(3) { height: 94px; padding-bottom: 1px; }
.item.off:nth-child(3) span { width: 116px; }
.item em { margin-left: 20px; height: 32px; width: 91px; border-radius: 8px; background: #fab40a; color: #8b4a0a; font: 600 14px/32px Inter, sans-serif; letter-spacing: .700px; text-align: center; flex: none; }

.main { width: 1471px; margin-left: 40px; background: #fafbfc; }
.hero { height: 206px; margin-top: -86px; padding: 0 40px; background: linear-gradient(135deg, #1a365d, #2d3748); color: #fff; display: flex; align-items: center; justify-content: space-between; }
.hero h1 { font-size: 50px; line-height: 80px; font-weight: 700; letter-spacing: 0; padding-top: 1px; margin-bottom: 9px; }
.hero p { font-size: 22px; line-height: 35px; color: rgba(255, 255, 255, .88); }
.hero-actions { display: flex; align-items: center; gap: 30px; }
.server { width: 231px; height: 50px; border: 1px solid rgba(255, 255, 255, .2); border-radius: 10px; background: rgba(255, 255, 255, .1); display: flex; align-items: center; gap: 10px; padding-left: 20px; font-size: 17.500px; font-weight: 500; letter-spacing: .250px; white-space: nowrap; }
.server i { width: 10px; height: 10px; border-radius: 50%; background: #10b981; }
.refresh { width: 181px; height: 54px; border: 1px solid rgba(255, 255, 255, .3); border-radius: 10px; background: rgba(255, 255, 255, .2); color: #fff; font-size: 18px; font-weight: 700; justify-content: center; gap: 11px; }

.content { padding: 40px; display: flex; gap: 40px; align-items: flex-start; }
.card { background: #fff; border: 1px solid #e2e8f0; border-radius: 15px; box-shadow: 0 5px 30px rgba(0, 0, 0, .08); overflow: hidden; }
.pcs { width: 976px; height: 700px; }
.card-head { height: 114px; padding: 0 40px 1px; display: flex; align-items: center; border-bottom: 1px solid #e2e8f0; background: linear-gradient(135deg, #fafbfd, #f1f5f9); }
.card-head h2 { margin-left: 15px; font-size: 25px; font-weight: 600; color: #1a202c; }
.filter { margin-left: auto; width: 217px; height: 53px; border: 1px solid #e2e8f0; border-radius: 10px; background: #f1f5f9; padding: 5px; display: flex; }
.filter button { width: 91px; height: 41px; border-radius: 8px; justify-content: center; font-size: 17.500px; color: #64748b; }
.filter button + button { width: 114px; padding-left: 10px; }
.filter .on { background: #fff; color: #3b82f6; font-weight: 700; font-size: 17px; box-shadow: 0 2px 5px rgba(0, 0, 0, .12); }
.list { height: 375px; border: 1px solid #e2e8f0; border-radius: 15px; padding: 30px; }
.pc { height: 129px; border: 1px solid #e2e8f0; border-radius: 12px; background: #f8fafc; display: flex; align-items: center; padding: 0 25px 0 31px; }
.dot { width: 13px; height: 13px; border-radius: 50%; background: #22c55e; }
.info { margin-left: 26px; padding-top: 2px; }
.info h3 { font-size: 20px; line-height: 32px; font-weight: 600; color: #1a202c; }
.info p { font: 16px/27px "Liberation Mono", monospace; letter-spacing: -.815px; color: #64686f; white-space: nowrap; }
.info h3 + p { margin-top: 3px; }
.state { margin-left: auto; display: flex; flex-direction: column; align-items: flex-end; white-space: nowrap; padding-bottom: 1px; }
.state b { height: 34px; width: 98px; border-radius: 17px; background: #dcfce7; color: #166534; font-size: 15px; font-weight: 500; line-height: 34px; letter-spacing: .600px; text-align: center; }
.state span { font-size: 15px; line-height: 24px; margin-top: 5px; color: #979fac; }
.control { width: 200px; height: 47px; margin-left: 26px; border-radius: 8px; background: #3b82f6; color: #fff; font-size: 17.500px; justify-content: center; gap: 10px; }
.updated { margin-top: 30px; text-align: right; font-size: 16px; color: #979fac; }

.side { width: 375px; display: flex; flex-direction: column; gap: 30px; }
.side h2 { height: 73px; line-height: 72px; padding: 0 30px; font-size: 20px; font-weight: 600; color: #1a202c; border-bottom: 1px solid #e2e8f0; background: linear-gradient(135deg, #fafbfd, #f1f5f9); }
.status { height: 370px; }
.status dl { padding: 30px; }
.status dl div { height: 59px; display: flex; align-items: center; justify-content: space-between; border-bottom: 1px solid #f1f5f9; font-size: 17.500px; letter-spacing: .060px; }
.status dl div:last-child { border: 0; padding-bottom: 1px; }
.status dt { color: #64748b; }
.status dd { font: 700 17px/27px "Liberation Mono", monospace; letter-spacing: -.600px; color: #1a202c; }
.status dd.muted { color: #64748b; }
.guide { height: 400px; }
.guide ul { padding: 40px 30px 0; }
.guide li { display: flex; gap: 15px; margin-bottom: 20px; font-size: 17.500px; line-height: 26px; color: #64748b; }
.guide li span { width: 250px; white-space: normal; }
.guide b { width: 30px; height: 30px; border-radius: 50%; background: #3b82f6; color: #fff; font-size: 15px; line-height: 30px; text-align: center; flex: none; }

/* Taskbar */
.taskbar { height: 60px; flex: none; border-top: 1px solid #a9b3c6; background: linear-gradient(90deg, #e2edf8 0, #dde6f6 18%, #d5dcf1 30%, #d3e0f8 42%, #d6dcee 55%, #d8def0 70%, #dee9f6 82%, #e0ecf7); display: flex; align-items: center; color: #1b1b1b; letter-spacing: -.300px; padding-bottom: 1px; }
.start { margin-left: 26px; }
.search { width: 273px; height: 39px; margin-left: 18px; border-radius: 20px; background: #f9fbfe; box-shadow: 0 1px 1px #b9c4d8; display: flex; align-items: center; padding: 0 11px 0 14px; color: #55575c; font-size: 16px; }
.search span { margin: 0 auto 0 12px; letter-spacing: -.100px; }
.apps { display: flex; margin-left: 7px; gap: 7px; }
.app { width: 48px; height: 49px; border-radius: 6px; display: flex; align-items: center; justify-content: center; position: relative; }
.app.current { background: #e9eef9; box-shadow: 0 0 1px #b0b8cc; }
.app.open::after, .app.current::after { content: ""; position: absolute; bottom: 0; width: 8px; height: 4px; border-radius: 2px; background: #80869a; }
.app.current::after { width: 20px; background: #1270ce; }
.ico-w { width: 24px; height: 24px; background: #fff; color: #111; font: italic 700 18px/24px "Roboto", sans-serif; text-align: center; -webkit-text-stroke: .7px; }
.taskbar p { margin-top: -2px; }
.taskbar p span { display: block; line-height: 20px; white-space: nowrap; }
.weather { display: flex; align-items: center; gap: 9px; margin-left: 449px; width: 169px; }
.dim { color: #60666f; }
.tray-up { margin-left: 35px; }
.lang { width: 40px; margin-left: 21px; text-align: center; }
.tray { display: flex; align-items: center; gap: 9px; margin-left: 16px; }
.clock { margin-left: auto; text-align: right; }
.bell { margin: 0 25px 0 11px; overflow: visible; }
.bell text { font-weight: 700; fill: #fff; }
.bell .z2 { fill: #1b1b1b; }
```
